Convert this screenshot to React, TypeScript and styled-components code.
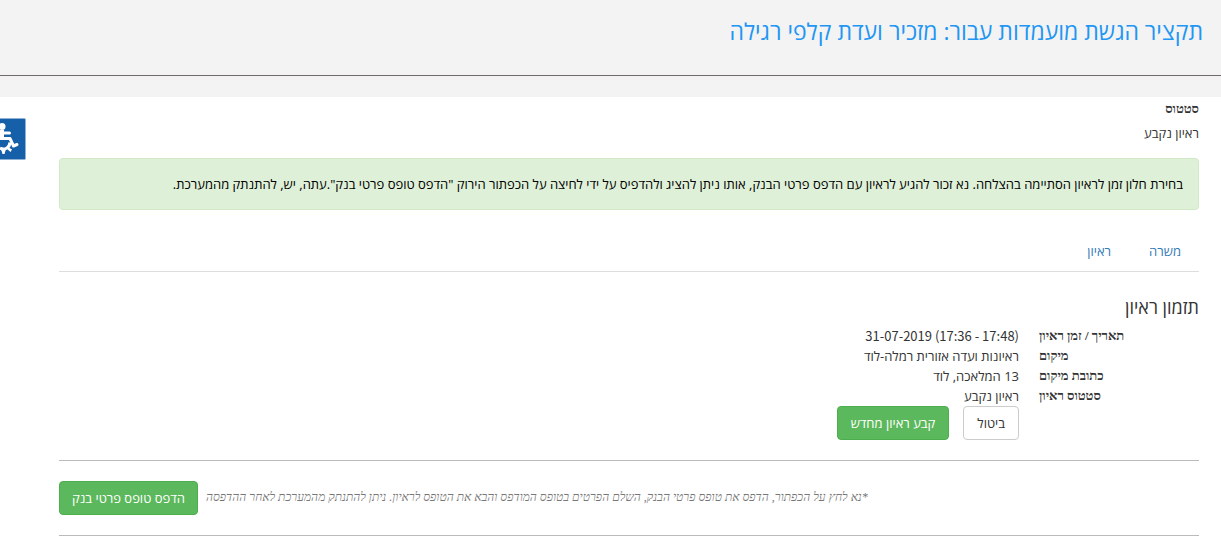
import React from "react";
import styled, { createGlobalStyle } from "styled-components";

const sans = `"Open Sans", "Noto Sans", "DejaVu Sans", sans-serif`;
const serif = `"Liberation Serif", "Times New Roman", serif`;
const numeric = `"Noto Sans CJK JP", "Open Sans", sans-serif`;

const GlobalStyle = createGlobalStyle`
  *, *::before, *::after { box-sizing: border-box; }
  body {
    margin: 0;
    background: #fff;
    color: #333;
    font: 13px/20px ${sans};
  }
`;

const Page = styled.div`
  overflow-x: hidden;
`;

const Header = styled.header`
  padding: 15px 0 21px;
  background: #f3f3f3;
`;

const Title = styled.h1`
  margin: 0;
  padding: 0 18px 28px;
  border-bottom: 1px solid #6f6a6e;
  color: #2196f3;
  font-size: 23px;
  font-weight: 400;
  line-height: 32px;
`;

const Main = styled.main`
  padding: 0 22px 0 59px;
`;

const StatusList = styled.dl`
  margin: 0;
  padding-top: 2px;
`;

const StatusTerm = styled.dt`
  font: bold 13px/20px ${serif};
`;

const StatusValue = styled.dd`
  margin: 4px 0 0;
`;

const Alert = styled.p`
  margin: 15px 0 20px;
  padding: 15px;
  border: 1px solid #d0e9c6;
  border-radius: 4px;
  background: #dff0d8;
  color: #000;
`;

const Tabs = styled.nav`
  display: flex;
  gap: 2px;
  border-bottom: 1px solid #ddd;
`;

const Tab = styled.a`
  padding: 11px 18px 10px;
  color: #337ab7;
  text-decoration: none;
`;

const SectionTitle = styled.h2`
  margin: 24px 0 8px;
  font-size: 18px;
  font-weight: 400;
  line-height: 22px;
`;

const Details = styled.dl`
  display: grid;
  grid-template-columns: 160px 1fr;
  column-gap: 20px;
  margin: 0;
`;

const DetailTerm = styled.dt`
  text-align: left;
  font: bold 13px/20px ${serif};
`;

const DetailValue = styled.dd<{ $numeric?: boolean }>`
  margin: 0;
  font-family: ${(p) => (p.$numeric ? numeric : sans)};
`;

const Actions = styled.div`
  display: flex;
  gap: 14px;
  padding-right: 180px;
`;

const Button = styled.button<{ $primary?: boolean; $wide?: boolean }>`
  flex: none;
  padding: 6px ${(p) => (p.$wide ? 13 : 12)}px;
  border: 1px solid ${(p) => (p.$primary ? "#4cae4c" : "#ccc")};
  border-radius: 4px;
  background: ${(p) => (p.$primary ? "#5cb85c" : "#fff")};
  color: ${(p) => (p.$primary ? "#fff" : "#333")};
  font: 13px/20px ${sans};
  cursor: pointer;
`;

const PrintRow = styled.section`
  display: flex;
  justify-content: flex-end;
  gap: 8px;
  margin-top: 20px;
  padding: 20px 0;
  border: solid #bbb;
  border-width: 1px 0;
`;

const Note = styled.em`
  padding-top: 6px;
  color: #777;
  font: italic 12px/20px ${serif};
`;

const AccessButton = styled.button`
  position: fixed;
  top: 118px;
  left: 0;
  width: 26px;
  height: 42px;
  padding: 0;
  border: 1px solid #8eb0d2;
  border-left: 0;
  border-radius: 0 2px 2px 0;
  background: #165fa9;
  cursor: pointer;

  svg { display: block; }
`;

export default function App() {
  return (
    <Page dir="rtl" lang="he">
      <GlobalStyle />
      <Header>
        <Title>תקציר הגשת מועמדות עבור: מזכיר ועדת קלפי רגילה</Title>
      </Header>
      <Main>
        <StatusList>
          <StatusTerm>סטטוס</StatusTerm>
          <StatusValue>ראיון נקבע</StatusValue>
        </StatusList>
        <Alert role="status">
          בחירת חלון זמן לראיון הסתיימה בהצלחה. נא זכור להגיע לראיון עם הדפס פרטי הבנק, אותו ניתן להציג ולהדפיס על ידי לחיצה על הכפתור הירוק "הדפס טופס פרטי בנק".עתה, יש, להתנתק מהמערכת.
        </Alert>
        <Tabs>
          <Tab href="#job">משרה</Tab>
          <Tab href="#interview">ראיון</Tab>
        </Tabs>
        <SectionTitle>תזמון ראיון</SectionTitle>
        <Details>
          <DetailTerm>תאריך / זמן ראיון</DetailTerm>
          <DetailValue $numeric><bdi dir="ltr">31-07-2019 (17:36 - 17:48)</bdi></DetailValue>
          <DetailTerm>מיקום</DetailTerm>
          <DetailValue>ראיונות ועדה אזורית רמלה-לוד</DetailValue>
          <DetailTerm>כתובת מיקום</DetailTerm>
          <DetailValue>13 המלאכה, לוד</DetailValue>
          <DetailTerm>סטטוס ראיון</DetailTerm>
          <DetailValue>ראיון נקבע</DetailValue>
        </Details>
        <Actions>
          <Button type="button" $wide>ביטול</Button>
          <Button type="button" $primary $wide>קבע ראיון מחדש</Button>
        </Actions>
        <PrintRow>
          <Note>*נא לחץ על הכפתור, הדפס את טופס פרטי הבנק, השלם הפרטים בטופס המודפס והבא את הטופס לראיון. ניתן להתנתק מהמערכת לאחר ההדפסה</Note>
          <Button type="button" $primary>הדפס טופס פרטי בנק</Button>
        </PrintRow>
      </Main>
      <AccessButton type="button" aria-label="נגישות">
        <svg width="25" height="40" viewBox="0 0 25 40" fill="none" stroke="#fff" aria-hidden="true">
          <circle cx="2" cy="7.500" r="3.500" fill="#fff" stroke="none" />
          <path d="M0 11H4V21H0Z" fill="#fff" stroke="none" />
          <path d="M2 14H9.500M2 19.500H10L13.500 27L17 25.500" strokeWidth="3" strokeLinejoin="round" strokeLinecap="round" />
          <path d="M0 29C4.500 31.500 9.500 29 10 23.500" strokeWidth="3" />
          <path d="M1 30H6L4.500 35H2.500ZM8 28L12 30.500L10.500 33L7 30Z" fill="#fff" stroke="none" />
        </svg>
      </AccessButton>
    </Page>
  );
}
